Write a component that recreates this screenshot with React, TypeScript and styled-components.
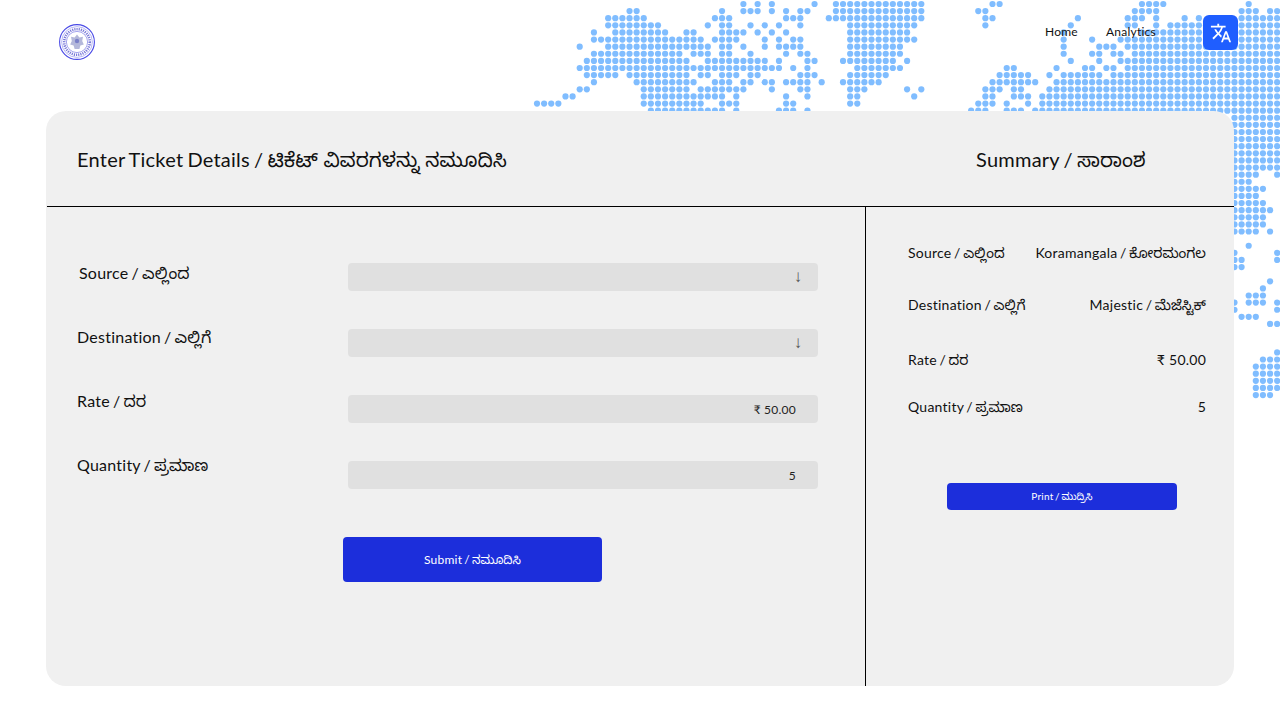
import styled, { createGlobalStyle } from "styled-components";
import { MdTranslate } from "react-icons/md";

const GlobalStyle = createGlobalStyle`
html, body {
  margin: 0;
  padding: 0;
  background: #fff;
}
body {
  font-family: "Lato", "Noto Sans Kannada", "Noto Sans", sans-serif;
  letter-spacing: 0.015em;
  word-spacing: -0.08em;
  color: #111;
  overflow: hidden;
}
`;

const DOT_ROWS: Record<number, string> = {
  0: "29,31,33,39,42-54,64,65,85-88,100",
  1: "13,14,26,29-31,33,35,37,38,42-54,62,63,84-87,99-101,103,104",
  2: "10-15,25-27,35-37,41-54,63,64,76,83-85,87,91,93,99-104",
  3: "10-17,24,26,27,30,32,34,37,44-53,63,75,83,84,87,89-104",
  4: "8,11-18,21,22,26-29,31,33,35,44-52,74,85-104",
  5: "8-23,25-28,32,34,36,37,44-53,74,78,82-104",
  6: "6,10-24,26,27,29,32,34-37,44-51,74,79-81,83-104",
  7: "8-20,22-24,26,27,30,35,37,38,44-51,74,78,79,81,82,84-104",
  8: "7-21,24-32,34,38,39,43-50,52,75,79,82-104",
  9: "6-34,36,38,45-51,66,67,73,77,78,80,81,83-104",
  10: "7-11,13-21,23,24,26-28,30,31,37-39,44-49,65-69,72,74-79,81-104",
  11: "8,14-22,25-27,29,30,32,33,35-38,40,43-48,64-70,73-104",
  12: "6,7,15-21,23-29,33,37,38,44-46,52,54,63-65,67,68,72-104",
  13: "4,5,15-26,28,35,38,44,45,53,63,64,67-69,71-104",
  14: "0-3,15-23,26-28,35,36,44,45,62-64,66,69,71-104",
  15: "16-26,28,34-36,38,61-63,66-68,70-104",
  16: "98-104", 17: "98-104", 18: "98-104", 19: "98-104",
  20: "98-104", 21: "98-104", 22: "98-104", 23: "98-104",
  24: "98-101,104",
  25: "98-100",
  26: "98-102",
  27: "98-101",
  28: "98-102",
  29: "98-103",
  30: "98-102",
  31: "98-102",
  32: "98-101,103",
  34: "100",
  35: "98,104",
  36: "98,99,104",
  37: "98,99",
  39: "103",
  40: "102",
  41: "100-102",
  42: "98,100-102,104",
  43: "98,104",
  44: "99-101",
  45: "103,104",
  49: "104",
  50: "102-104",
  51: "101-104", 52: "101-104", 53: "101-104", 54: "101-104",
  55: "101-103",
};

const expand = (spec: string) =>
  spec.split(",").flatMap((part) => {
    const [a, b] = part.split("-").map(Number);
    if (b === undefined) return [a];
    return Array.from({ length: b - a + 1 }, (_, i) => a + i);
  });

const Page = styled.div`
  position: relative;
  width: 1280px;
  height: 720px;
  overflow: hidden;
`;

const MapArt = styled.svg`
  position: absolute;
  top: 0;
  left: 0;
`;

const Header = styled.header`
  position: relative;
  height: 111px;
  box-sizing: border-box;
  display: flex;
  justify-content: space-between;
  padding: 15px 42px 0 59px;
`;

const Logo = styled.svg`
  margin-top: 9px;
`;

const Nav = styled.nav`
  display: flex;
  align-items: flex-start;
`;

const NavLink = styled.a`
  font-size: 12px;
  line-height: 16px;
  margin-top: 9px;
  margin-right: 28px;
  color: #111;
`;

const TranslateButton = styled.button`
  width: 35px;
  height: 35px;
  margin-left: 19px;
  padding: 0;
  border: 0;
  border-radius: 6px;
  background: #1f5eff;
  color: #fff;
  display: flex;
  align-items: center;
  justify-content: center;
`;

const Card = styled.main`
  position: relative;
  width: 1188px;
  height: 575px;
  margin-left: 46px;
  background: #f0f0f0;
  border-radius: 20px;
  display: grid;
  grid-template-columns: 820px 1fr;
  grid-template-rows: 96px 1fr;
`;

const CardHead = styled.div<{ $left: number; $inset?: number }>`
  border-bottom: 1px solid #000;
  display: flex;
  align-items: center;
  white-space: pre;
  margin-left: ${(p) => p.$inset || 0}px;
  padding-left: ${(p) => p.$left}px;
  padding-top: 7px;
  box-sizing: border-box;
  font-size: 20px;
  color: #111;
`;

const Kn = styled.span`
  letter-spacing: 0;
  word-spacing: 0;
  font-family: "Noto Sans Kannada", "Noto Sans", sans-serif;
`;

const FormPane = styled.section`
  border-right: 1px solid #000;
  display: grid;
  grid-template-columns: 271px 470px;
  grid-template-rows: auto 1fr;
  padding-top: 54px;
  padding-left: 31px;
  align-content: start;
`;

const LabelColumn = styled.div`
  display: flex;
  flex-direction: column;
  gap: 40px;
`;

const FieldLabel = styled.label<{ $indent?: number }>`
  height: 24px;
  font-size: 16px;
  line-height: 24px;
  margin-left: ${(p) => p.$indent || 0}px;
`;

const InputColumn = styled.div`
  display: flex;
  flex-direction: column;
  gap: 38px;
  padding-top: 2px;
`;

const Field = styled.div`
  height: 28px;
  background: #e0e0e0;
  border-radius: 4px;
  display: flex;
  align-items: center;
  justify-content: flex-end;
  padding-right: 22px;
  font-size: 12px;
  word-spacing: 0;
  color: #222;
`;

const Arrow = styled.span`
  font-family: "Liberation Sans", sans-serif;
  font-size: 17px;
  margin-right: -6.5px;
  color: #555;
`;

const SubmitButton = styled.button`
  grid-column: 1 / 3;
  justify-self: start;
  width: 259px;
  height: 45px;
  margin-top: 48px;
  margin-left: 266px;
  padding: 2px 0 0;
  border: 0;
  border-radius: 4px;
  background: #1c2edb;
  color: #fff;
  font-family: inherit;
  letter-spacing: inherit;
  word-spacing: inherit;
  font-size: 12px;
`;

const SummaryPane = styled.section`
  padding: 34px 28px 0 42px;
  display: flex;
  flex-direction: column;
`;

const SummaryRow = styled.div<{ $height: number }>`
  height: ${(p) => p.$height}px;
  display: flex;
  justify-content: space-between;
  align-items: flex-start;
  font-size: 14px;
  line-height: 24px;
`;

const Amount = styled.span`
  word-spacing: 0;
`;

const PrintButton = styled.button`
  width: 230px;
  height: 27px;
  margin-top: 31px;
  margin-left: 39px;
  padding: 2px 0 0;
  border: 0;
  border-radius: 4px;
  background: #1c2edb;
  color: #fff;
  font-family: inherit;
  letter-spacing: inherit;
  word-spacing: inherit;
  font-size: 10px;
`;

const Dual = ({ en, kn }: { en: string; kn: string }) => (
  <span>
    {en} / <Kn>{kn}</Kn>
  </span>
);

const SealMark = () => (
  <Logo width="36" height="36" viewBox="0 0 36 36">
    <circle cx="18" cy="18" r="17.4" fill="#fff" stroke="#4a4ae6" strokeWidth="1.1" />
    <circle cx="18" cy="18" r="15.4" fill="none" stroke="#8a8aee" strokeWidth="0.6" />
    <circle cx="18" cy="18" r="12.8" fill="none" stroke="#7a7ad8" strokeWidth="2.6" strokeDasharray="1.2 1" />
    <circle cx="18" cy="18" r="10.6" fill="#fff" stroke="#6a6ae0" strokeWidth="0.6" />
    <path d="M18 10.5l2.4 3 3.6-.8-.8 4.3 1.6 3.4-3.4 1-1 3.6h-4.8l-1-3.6-3.4-1 1.6-3.4-.8-4.3 3.6.8z" fill="#b4b8da" />
    <circle cx="18" cy="17" r="2.2" fill="#7b80c8" />
  </Logo>
);

const Map = () => (
  <MapArt width="1280" height="400" viewBox="0 0 1280 400">
    {Object.entries(DOT_ROWS).flatMap(([row, spec]) =>
      expand(spec).map((col) => (
        <circle
          key={row + "-" + col}
          cx={537 + 7.117 * col}
          cy={4 + 7.11 * Number(row)}
          r="3.1"
          fill="#80bdff"
        />
      ))
    )}
  </MapArt>
);

function App() {
  return (
    <Page>
      <GlobalStyle />
      <Map />
      <Header>
        <SealMark />
        <Nav>
          <NavLink>Home</NavLink>
          <NavLink>Analytics</NavLink>
          <TranslateButton>
            <MdTranslate size={22} />
          </TranslateButton>
        </Nav>
      </Header>
      <Card>
        <CardHead $left={30} $inset={1}>
          <Dual en="Enter Ticket Details" kn="ಟಿಕೆಟ್ ವಿವರಗಳನ್ನು ನಮೂದಿಸಿ" />
        </CardHead>
        <CardHead $left={110}>
          <Dual en="Summary" kn="ಸಾರಾಂಶ" />
        </CardHead>
        <FormPane>
          <LabelColumn>
            <FieldLabel $indent={2}><Dual en="Source" kn="ಎಲ್ಲಿಂದ" /></FieldLabel>
            <FieldLabel><Dual en="Destination" kn="ಎಲ್ಲಿಗೆ" /></FieldLabel>
            <FieldLabel><Dual en="Rate" kn="ದರ" /></FieldLabel>
            <FieldLabel><Dual en="Quantity" kn="ಪ್ರಮಾಣ" /></FieldLabel>
          </LabelColumn>
          <InputColumn>
            <Field><Arrow>↓</Arrow></Field>
            <Field><Arrow>↓</Arrow></Field>
            <Field>₹ 50.00</Field>
            <Field>5</Field>
          </InputColumn>
          <SubmitButton><Dual en="Submit" kn="ನಮೂದಿಸಿ" /></SubmitButton>
        </FormPane>
        <SummaryPane>
          <SummaryRow $height={52}>
            <Dual en="Source" kn="ಎಲ್ಲಿಂದ" />
            <Dual en="Koramangala" kn="ಕೋರಮಂಗಲ" />
          </SummaryRow>
          <SummaryRow $height={55}>
            <Dual en="Destination" kn="ಎಲ್ಲಿಗೆ" />
            <Dual en="Majestic" kn="ಮೆಜೆಸ್ಟಿಕ್" />
          </SummaryRow>
          <SummaryRow $height={47}>
            <Dual en="Rate" kn="ದರ" />
            <Amount>₹ 50.00</Amount>
          </SummaryRow>
          <SummaryRow $height={57}>
            <Dual en="Quantity" kn="ಪ್ರಮಾಣ" />
            <Amount>5</Amount>
          </SummaryRow>
          <PrintButton><Dual en="Print" kn="ಮುದ್ರಿಸಿ" /></PrintButton>
        </SummaryPane>
      </Card>
    </Page>
  );
}

export default App;
